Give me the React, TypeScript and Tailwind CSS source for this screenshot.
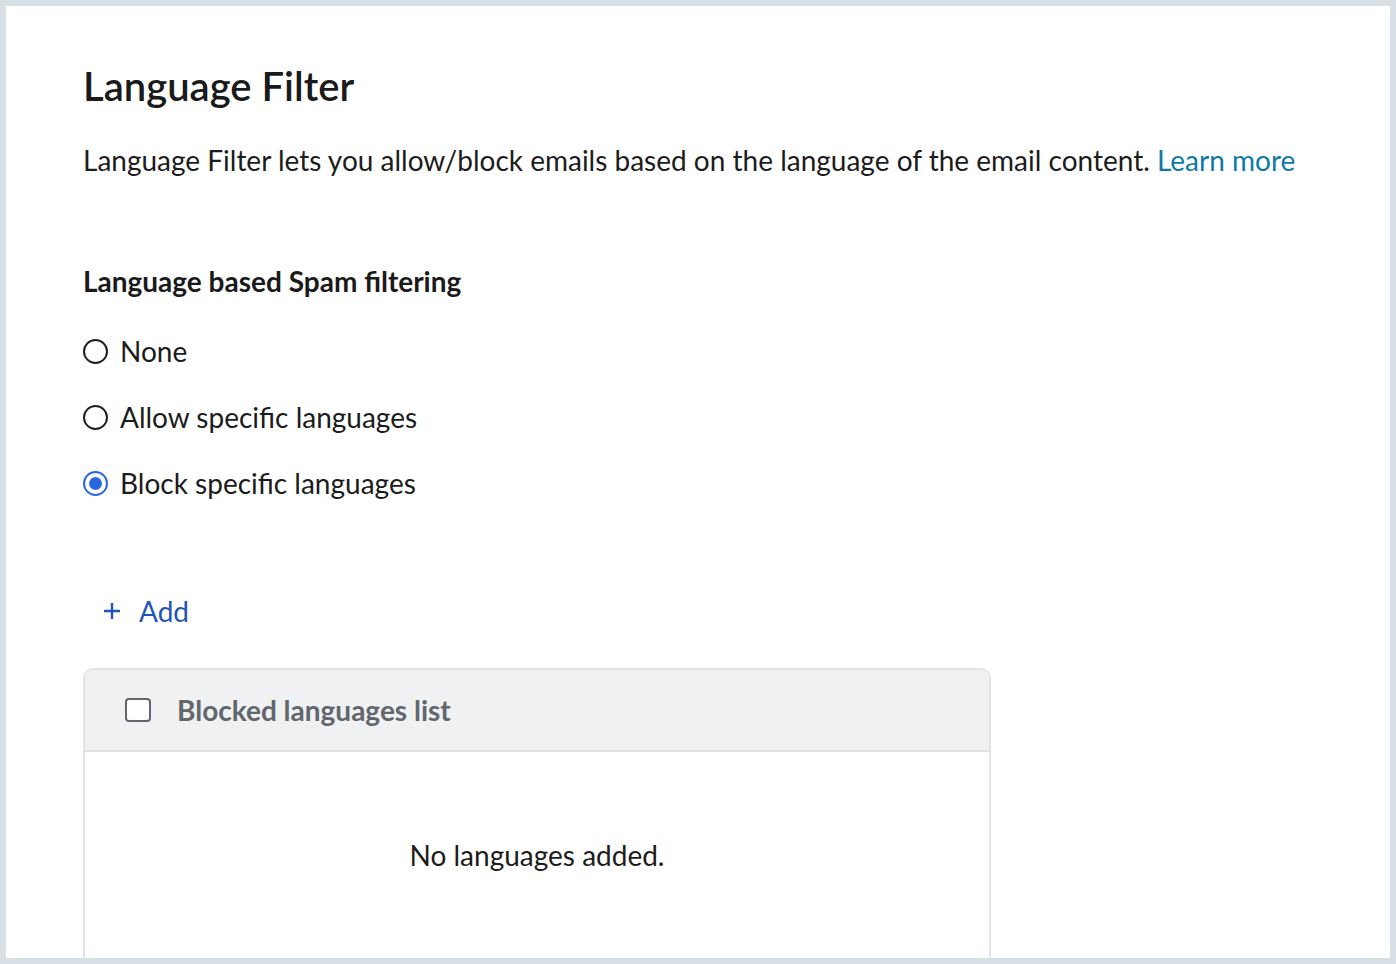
const font = { fontFamily: "Lato, 'Noto Sans', sans-serif" };

function Radio({ label, checked }: { label: string; checked?: boolean }) {
  return (
    <label className="flex items-center gap-[12px] h-[28px]">
      {checked ? (
        <span className="flex h-[25px] w-[25px] items-center justify-center rounded-full border-2 border-[#2b66de]">
          <span className="h-[13px] w-[13px] rounded-full bg-[#2b66de]" />
        </span>
      ) : (
        <span className="h-[25px] w-[25px] rounded-full border-2 border-[#1f1f1f]" />
      )}
      <span className="text-[28px] leading-none text-[#1c1c1c]">{label}</span>
    </label>
  );
}

export default function App() {
  return (
    <div style={font} className="h-[964px] w-[1396px] overflow-hidden bg-[#d9e0e5] p-[6px]">
      <div className="h-full overflow-hidden bg-white pl-[77px] pt-[60px]">
        <h1 className="text-[40px] font-semibold leading-none text-[#1a1a1a]">Language Filter</h1>
        <p className="mt-[40px] text-[28px] leading-none text-[#1c1c1c]">
          Language Filter lets you allow/block emails based on the language of the email content.{" "}
          <a className="text-[#0f7aa8]">Learn more</a>
        </p>

        <h2 className="mt-[93px] text-[28px] font-bold leading-none text-[#1a1a1a]">Language based Spam filtering</h2>
        <div className="mt-[42px] flex flex-col gap-[38px]">
          <Radio label="None" />
          <Radio label="Allow specific languages" />
          <Radio label="Block specific languages" checked />
        </div>

        <button className="mt-[100px] ml-[20px] flex h-[28px] items-center gap-[18px] text-[28px] leading-none text-[#1f55b5]">
          <svg width="18" height="18" viewBox="0 0 18 18" fill="none" stroke="currentColor" strokeWidth="2.4">
            <path d="M9 1v16M1 9h16" />
          </svg>
          Add
        </button>

        <div className="mt-[43px] h-[320px] w-[908px] rounded-t-[10px] border-2 border-b-0 border-[#e2e4e8]">
          <div className="flex h-[82px] items-center gap-[26px] rounded-t-[8px] border-b-2 border-[#e2e4e8] bg-[#f0f1f3] pl-[40px]">
            <span className="h-[24px] w-[26px] rounded-[4px] border-2 border-[#62666d] bg-white" />
            <span className="text-[28px] font-bold leading-none text-[#62666d]">Blocked languages list</span>
          </div>
          <div className="flex justify-center pt-[89px]">
            <span className="text-[28px] leading-none text-[#1c1c1c]">No languages added.</span>
          </div>
        </div>
      </div>
    </div>
  );
}
